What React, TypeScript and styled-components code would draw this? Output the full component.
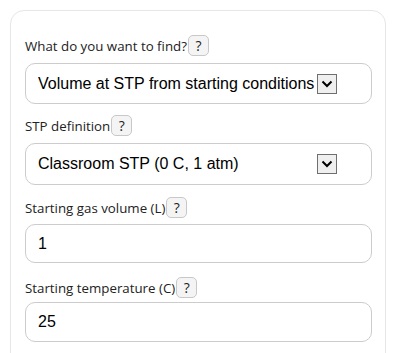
import React from "react";
import styled, { createGlobalStyle } from "styled-components";

const Global = createGlobalStyle`
  html, body { margin: 0; padding: 0; background: #ffffff; }
  body { padding: 10px 0 0 10px; font-family: "Open Sans", "Noto Sans", sans-serif; }
  * { box-sizing: border-box; }
`;

const Card = styled.div`
  width: 376px;
  border: 1px solid #e6e6e6;
  border-radius: 14px;
  padding: 24px 13px 20px 14px;
  background: #fff;
`;

const Group = styled.div<{ $mb: number }>`
  display: flex;
  flex-direction: column;
  margin-bottom: ${(p) => p.$mb}px;
`;

const LabelRow = styled.div<{ $mb: number }>`
  display: flex;
  align-items: center;
  height: 21px;
  margin-bottom: ${(p) => p.$mb}px;
`;

const Label = styled.label`
  font-family: "Open Sans", "Noto Sans", sans-serif;
  font-size: 13.3px;
  color: #222;
  white-space: nowrap;
`;

const Help = styled.button`
  width: 21px;
  height: 21px;
  margin-left: 1px;
  padding: 0;
  border: 1px solid #c8c8c8;
  border-radius: 5px;
  background: #f4f4f4;
  font-family: "Open Sans", "Noto Sans", sans-serif;
  font-size: 14px;
  color: #222;
  display: flex;
  align-items: center;
  justify-content: center;
`;

const Field = styled.div<{ $h: number }>`
  height: ${(p) => p.$h}px;
  border: 1px solid #cccccc;
  border-radius: 10px;
  display: flex;
  align-items: center;
  padding: 0 12px;
  font-family: "Liberation Sans", Arial, sans-serif;
  font-size: 16px;
  color: #000;
  background: #fff;
`;

const SelectField = styled(Field)`
  padding-right: 34px;
`;

const SelectText = styled.span`
  flex: 1;
  white-space: nowrap;
  overflow: hidden;
`;

const ArrowBox = styled.span`
  width: 20px;
  height: 20px;
  flex: none;
  border: 1px solid #6f6f6f;
  background: #efefef;
  display: flex;
  align-items: center;
  justify-content: center;
`;

const Arrow = () => (
  <ArrowBox>
    <svg width="12" height="8" viewBox="0 0 12 8">
      <path d="M1.5 1.5 L6 6 L10.5 1.5" fill="none" stroke="#000" strokeWidth="2" />
    </svg>
  </ArrowBox>
);

const Row = ({
  label,
  gap,
  mb,
  children,
}: {
  label: string;
  gap: number;
  mb: number;
  children: React.ReactNode;
}) => (
  <Group $mb={mb}>
    <LabelRow $mb={gap}>
      <Label>{label}</Label>
      <Help>?</Help>
    </LabelRow>
    {children}
  </Group>
);

export default function App() {
  return (
    <>
      <Global />
      <Card>
        <Row label="What do you want to find?" gap={7} mb={11}>
          <SelectField $h={41}>
            <SelectText>Volume at STP from starting conditions</SelectText>
            <Arrow />
          </SelectField>
        </Row>
        <Row label="STP definition" gap={7} mb={12}>
          <SelectField $h={42}>
            <SelectText>Classroom STP (0 C, 1 atm)</SelectText>
            <Arrow />
          </SelectField>
        </Row>
        <Row label="Starting gas volume (L)" gap={6} mb={14}>
          <Field $h={39}>1</Field>
        </Row>
        <Row label="Starting temperature (C)" gap={4} mb={12}>
          <Field $h={40}>25</Field>
        </Row>
      </Card>
    </>
  );
}
